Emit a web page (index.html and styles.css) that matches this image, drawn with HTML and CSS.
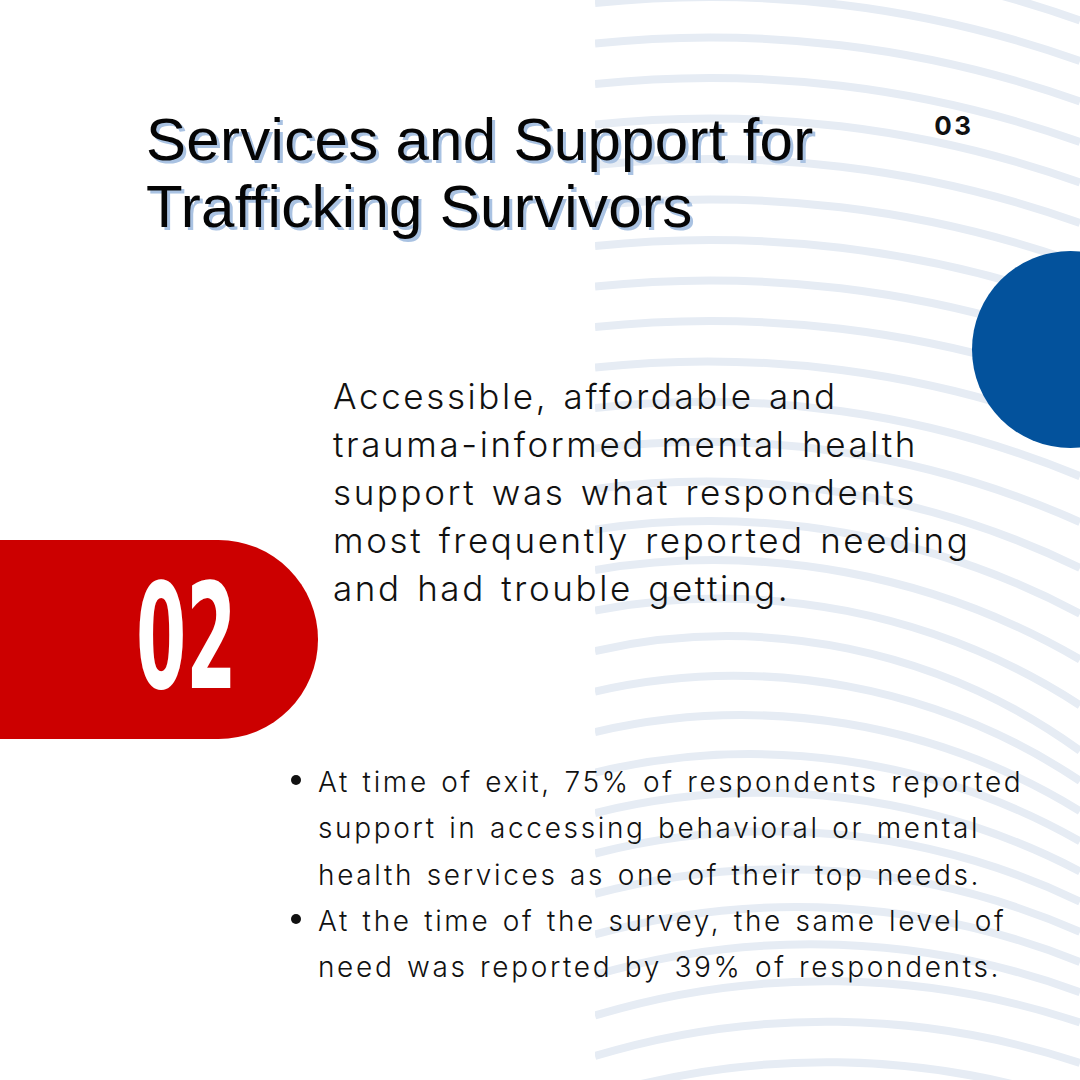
FILE: index.html
```html
<!DOCTYPE html>
<html lang="en">
<head>
<meta charset="utf-8">
<title>Services and Support for Trafficking Survivors</title>
<link rel="stylesheet" href="styles.css">
</head>
<body>
<main class="page">
  <svg class="ripples" viewBox="595 0 485 1080" aria-hidden="true">
    <g fill="none" stroke="#e6ecf4" stroke-width="8">
      <path d="M595 -37.5 A1100 1100 0 0 1 1080 20.5"/>
      <path d="M595 3 A1100 1100 0 0 1 1080 61"/>
      <path d="M595 43.5 A1100 1100 0 0 1 1080 101.5"/>
      <path d="M595 84 A1100 1100 0 0 1 1080 142"/>
      <path d="M595 124.5 A1100 1100 0 0 1 1080 182.5"/>
      <path d="M595 165 A1100 1100 0 0 1 1080 223"/>
      <path d="M595 205.5 A1100 1100 0 0 1 1080 263.5"/>
      <path d="M595 246 A1100 1100 0 0 1 1080 304"/>
      <path d="M595 286.5 A1100 1100 0 0 1 1080 344.5"/>
      <path d="M595 327 A1100 1100 0 0 1 1080 385"/>
      <path d="M595 367.5 A1041 1041 0 0 1 1080 430.4"/>
      <path d="M595 408 A978 978 0 0 1 1080 476.2"/>
      <path d="M595 448.5 A915 915 0 0 1 1080 522.1"/>
      <path d="M595 489 A852 852 0 0 1 1080 567.9"/>
      <path d="M595 529.5 A788 788 0 0 1 1080 613.7"/>
      <path d="M595 570 A725 725 0 0 1 1080 659.5"/>
      <path d="M595 610.5 A662 662 0 0 1 1080 705.3"/>
      <path d="M595 651 A601 601 0 0 1 1080 750.7"/>
      <path d="M595 691.5 A623 623 0 0 1 1080 780.9"/>
      <path d="M595 732 A645 645 0 0 1 1080 811.1"/>
      <path d="M595 772.5 A667 667 0 0 1 1080 841.3"/>
      <path d="M595 813 A689 689 0 0 1 1080 871.4"/>
      <path d="M595 853.5 A712 712 0 0 1 1080 901.6"/>
      <path d="M595 894 A734 734 0 0 1 1080 931.9"/>
      <path d="M595 934.5 A756 756 0 0 1 1080 962"/>
      <path d="M595 975 A778 778 0 0 1 1080 992.2"/>
      <path d="M595 1015.5 A800 800 0 0 1 1080 1022.5"/>
      <path d="M595 1056 A800 800 0 0 1 1080 1063"/>
      <path d="M595 1096.5 A800 800 0 0 1 1080 1103.5"/>
    </g>
  </svg>
  <div class="dot-blue" aria-hidden="true"></div>

  <header class="header">
    <h1 class="title">Services and Support for<br>Trafficking Survivors</h1>
    <span class="page-no">03</span>
  </header>

  <section class="feature">
    <div class="pill"><span class="pill-num">02</span></div>
    <p class="lead">Accessible, affordable and<br>trauma-informed mental health<br>support was what respondents<br>most frequently reported needing<br>and had trouble getting.</p>
  </section>

  <ul class="facts">
    <li class="fact">At time of exit, 75% of respondents reported<br>support in accessing behavioral or mental<br>health services as one of their top needs.</li>
    <li class="fact">At the time of the survey, the same level of<br>need was reported by 39% of respondents.</li>
  </ul>
</main>
</body>
</html>
```

FILE: styles.css
```css
* { box-sizing: border-box; }

html, body {
  margin: 0;
  padding: 0;
  background: #ffffff;
}

.page {
  position: relative;
  width: 1080px;
  height: 1080px;
  overflow: hidden;
  background: #ffffff;
  padding-top: 106px;
  font-family: "Inter", "Liberation Sans", sans-serif;
  color: #111111;
}

.ripples {
  position: absolute;
  left: 595px;
  top: 0;
  width: 485px;
  height: 1080px;
  z-index: 0;
}

.dot-blue {
  position: absolute;
  left: 972px;
  top: 251px;
  width: 197px;
  height: 197px;
  border-radius: 50%;
  background: #03529c;
  z-index: 1;
}

.header,
.feature,
.facts {
  position: relative;
  z-index: 2;
}

.header {
  display: flex;
  align-items: flex-start;
  padding-left: 146px;
  padding-right: 109px;
}

.title {
  margin: 0;
  font-family: "Liberation Sans", Arial, sans-serif;
  font-weight: 400;
  font-size: 60px;
  line-height: 67px;
  letter-spacing: 0.3px;
  color: #050505;
  text-shadow: 3px 3px 0 #a9c2e2;
}

.page-no {
  margin-left: auto;
  margin-top: 5px;
  font-family: "Inter", sans-serif;
  font-weight: 700;
  font-size: 26px;
  line-height: 30px;
  letter-spacing: 2.5px;
  margin-right: -2.5px;
  color: #111111;
}

.feature {
  display: flex;
  align-items: flex-start;
  margin-top: 132px;
}

.pill {
  flex: none;
  width: 318px;
  height: 199px;
  margin-top: 168px;
  background: #cc0000;
  border-radius: 0 99.5px 99.5px 0;
  display: flex;
  align-items: center;
  padding-left: 136px;
  padding-bottom: 6px;
  overflow: hidden;
}

.pill-num {
  display: inline-block;
  font-family: "Liberation Sans Narrow", "DejaVu Sans Condensed", sans-serif;
  font-weight: 700;
  font-size: 146px;
  line-height: 1;
  color: #ffffff;
  transform: scaleX(0.55);
  transform-origin: left center;
}

.lead {
  margin: 0 0 0 15px;
  font-weight: 350;
  font-size: 35px;
  line-height: 48px;
  letter-spacing: 2.6px;
  word-spacing: 3px;
  color: #111111;
  white-space: nowrap;
}

.facts {
  list-style: none;
  margin: 20px 0 0 0;
  padding: 0 0 0 291px;
}

.fact {
  display: grid;
  grid-template-columns: 27px auto;
  font-weight: 350;
  font-size: 28px;
  line-height: 46.3px;
  letter-spacing: 2.65px;
  word-spacing: 2px;
  color: #111111;
  white-space: nowrap;
}

.fact::before {
  content: "";
  width: 10px;
  height: 10px;
  margin-top: 16px;
  border-radius: 50%;
  background: #111111;
}
```
